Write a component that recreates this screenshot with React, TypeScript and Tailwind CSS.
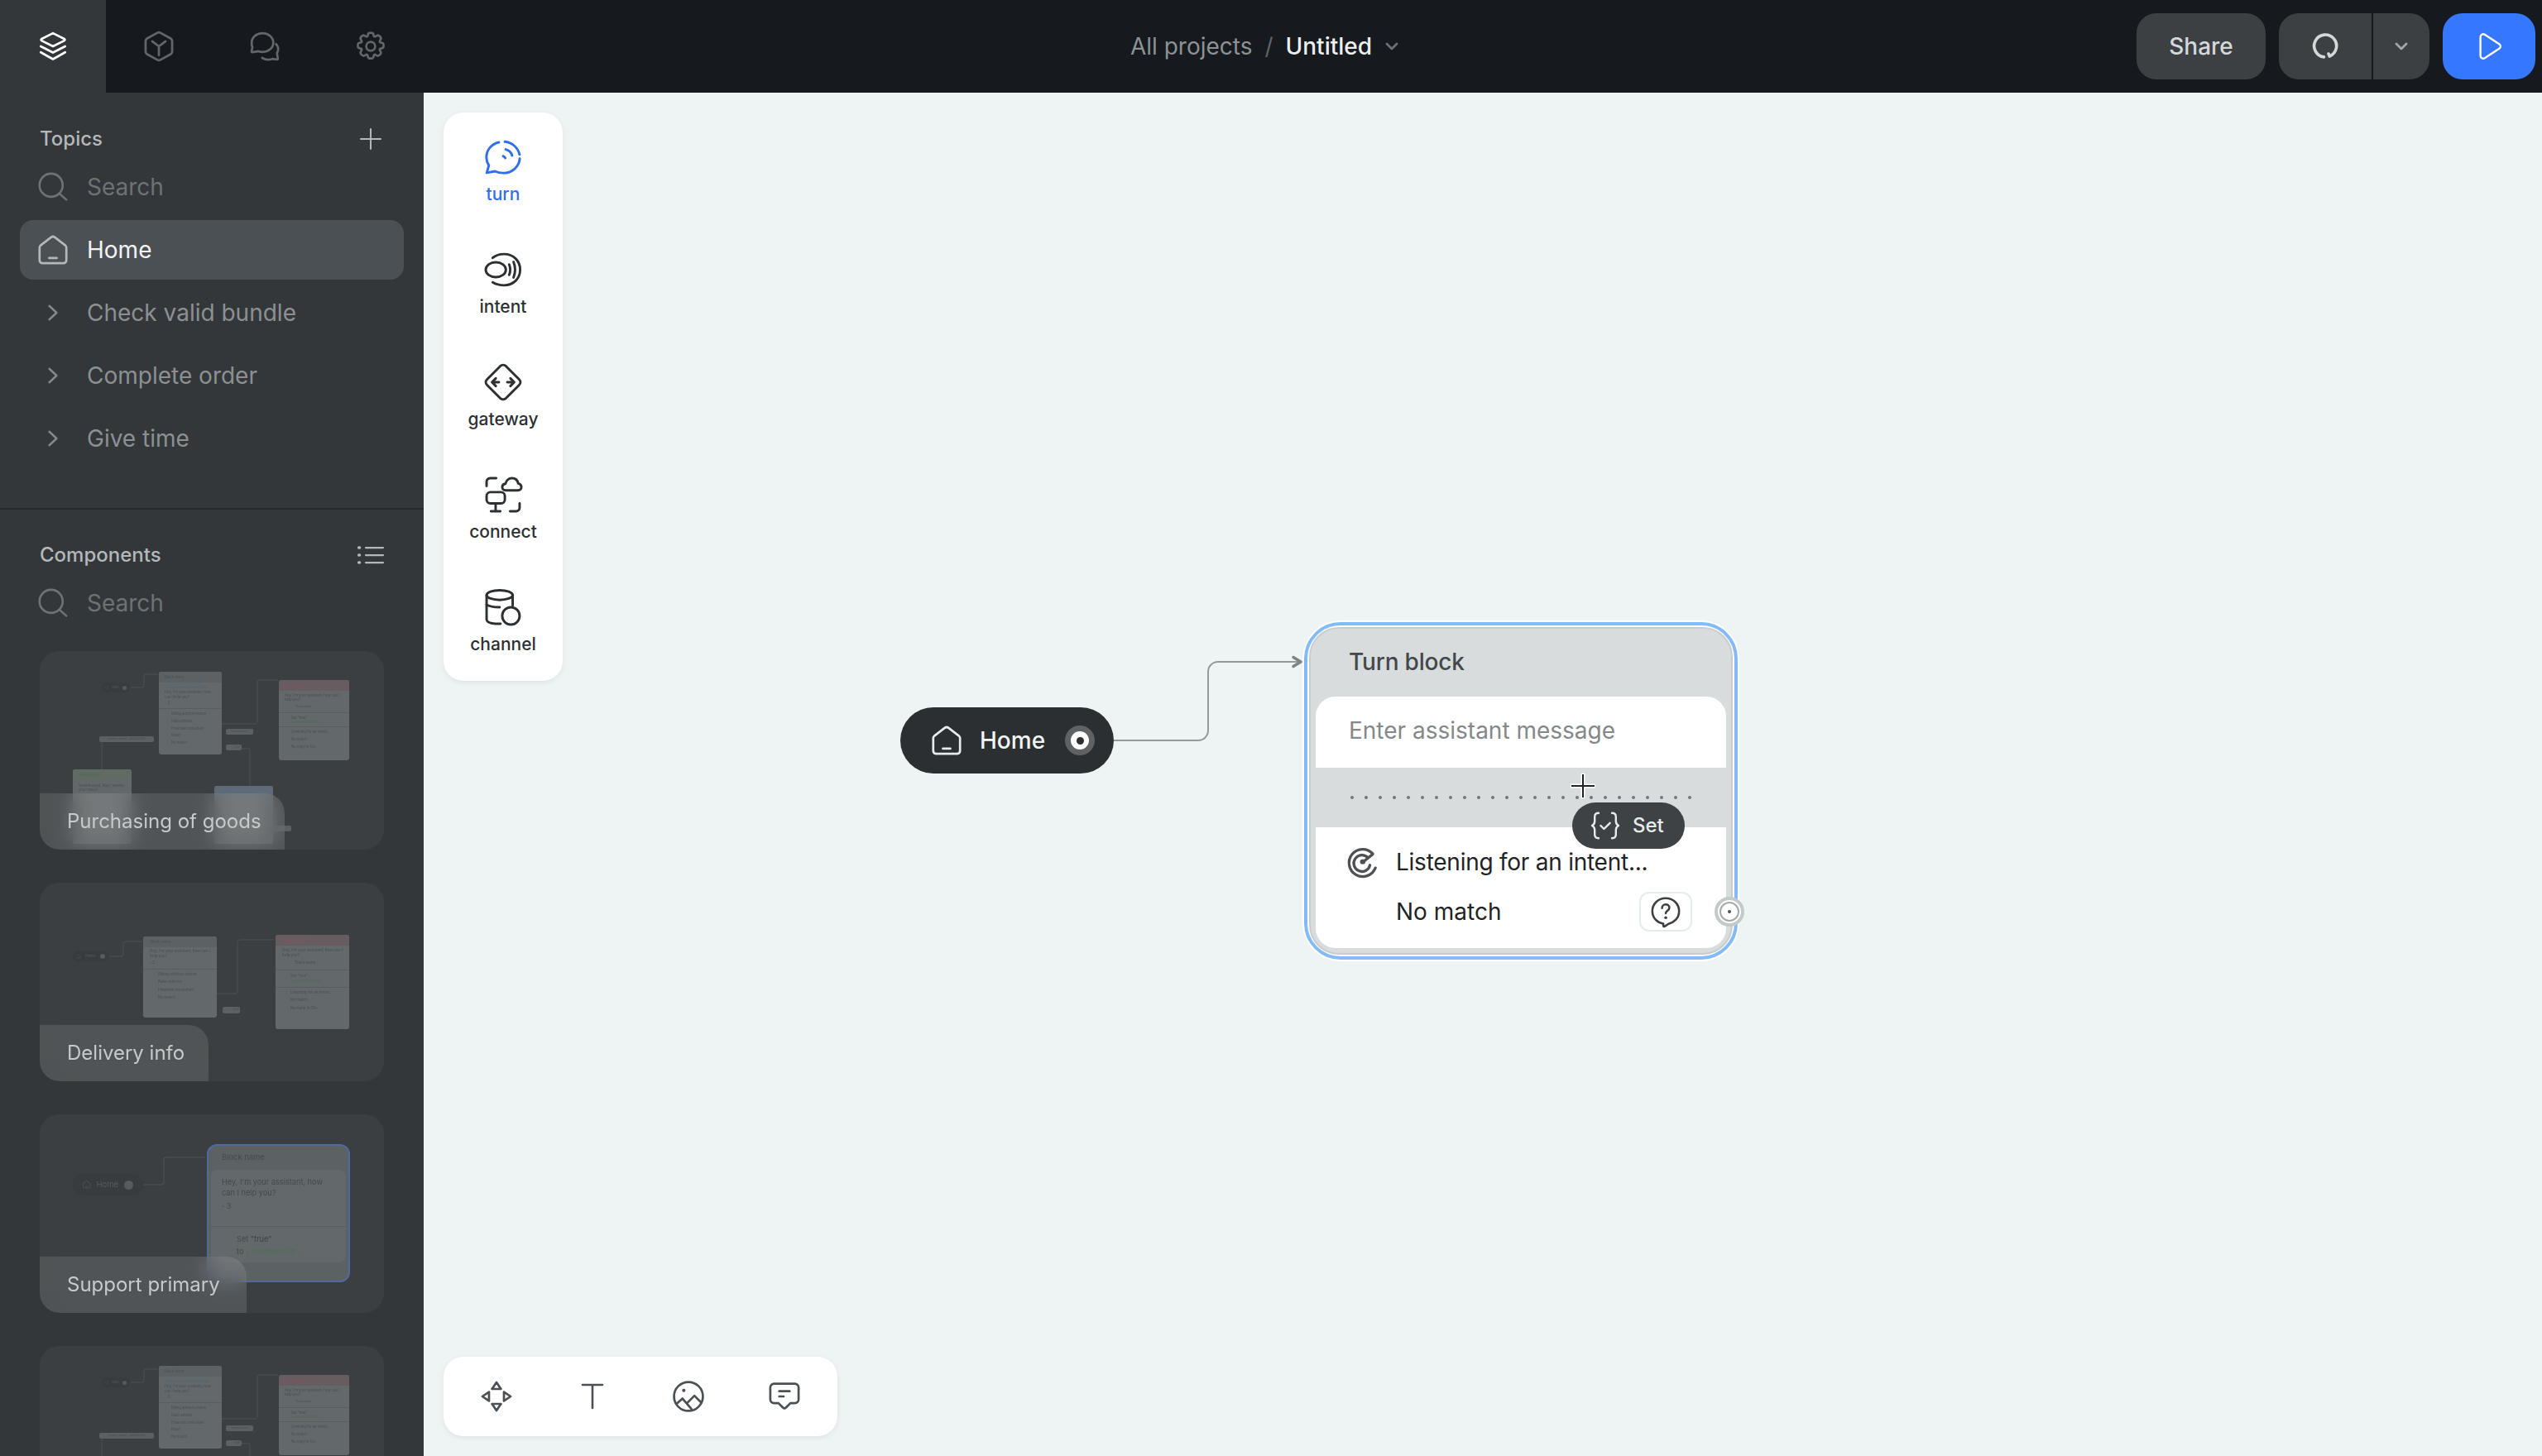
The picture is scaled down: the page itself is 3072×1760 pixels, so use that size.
import React from 'react';

const font = 'font-["Inter","Noto_Sans",sans-serif]';

// ---------------------------------------------------------------------------
// Icons
// ---------------------------------------------------------------------------

function Ico({ className, sw = 1.5, children }: { className?: string; sw?: number; children: React.ReactNode }) {
  return (
    <svg
      viewBox="2 2 20 20"
      fill="none"
      stroke="currentColor"
      strokeWidth={sw}
      strokeLinecap="round"
      strokeLinejoin="round"
      className={className}
      overflow="visible"
    >
      {children}
    </svg>
  );
}

type IconProps = { className?: string; sw?: number };

const LayersIcon = (p: IconProps) => (
  <Ico {...p}>
    <path d="M12 3.200 19.600 7c.5.3.5.9 0 1.200L12 12 4.400 8.200c-.5-.3-.5-.9 0-1.200Z" />
    <path d="M3.800 12 12 16.200 20.200 12" />
    <path d="M3.800 16 12 20.600 20.200 16" />
  </Ico>
);
const BoxIcon = (p: IconProps) => (
  <Ico {...p}>
    <path d="M11 2.900c.6-.3 1.400-.3 2 0l6.900 3.800c.6.4 1 1 1 1.700v7.200c0 .7-.4 1.300-1 1.700L13 21.100c-.6.3-1.400.3-2 0l-6.900-3.800c-.6-.4-1-1-1-1.700V8.400c0-.7.4-1.300 1-1.700Z" />
    <path d="M7.500 8.600 12 12l4.500-3.400M12 12v6" />
  </Ico>
);
const ChatsIcon = (p: IconProps) => (
  <Ico {...p}>
    <path d="M10.500 3.200c4 0 7.200 2.700 7.200 6.300s-3.200 6.300-7.200 6.300c-1 0-1.900-.2-2.800-.5L3.800 16c-.5 0-.8-.3-.7-.7l.6-2.600A6 6 0 0 1 3.200 9.500c0-3.600 3.300-6.300 7.300-6.300Z" />
    <path d="M19.500 10.500c1 .9 1.500 2.100 1.500 3.500 0 1-.3 1.800-.8 2.600l.6 3.800c0 .3-.2.500-.5.500l-3.300-.5c-.9.400-1.800.6-2.800.6-1.500 0-2.900-.5-4-1.300" />
  </Ico>
);
const GearIcon = (p: IconProps) => (
  <Ico {...p}>
    <path d="M10.300 3.600c.3-1 3.100-1 3.400 0l.4 1.400c.1.400.6.600 1 .4l1.300-.7c.9-.5 2.900 1.500 2.400 2.400l-.7 1.300c-.2.400 0 .9.400 1l1.400.4c1 .3 1 3.100 0 3.400l-1.400.4c-.4.100-.6.600-.4 1l.7 1.300c.5.900-1.500 2.900-2.400 2.400l-1.300-.7c-.4-.2-.9 0-1 .4l-.4 1.400c-.3 1-3.100 1-3.400 0l-.4-1.400c-.1-.4-.6-.6-1-.4l-1.300.7c-.9.500-2.900-1.500-2.400-2.400l.7-1.300c.2-.4 0-.9-.4-1l-1.400-.4c-1-.3-1-3.100 0-3.400l1.400-.4c.4-.1.600-.6.400-1l-.7-1.300c-.5-.9 1.500-2.900 2.400-2.400l1.300.7c.4.2.9 0 1-.4Z" />
    <circle cx="12" cy="12" r="3" />
  </Ico>
);
const SearchIcon = (p: IconProps) => (
  <Ico {...p}>
    <circle cx="11" cy="10.500" r="8" />
    <path d="m17 16.500 4.500 4" />
  </Ico>
);
const HomeIcon = (p: IconProps) => (
  <Ico {...p}>
    <path d="M3 10.500c0-.6.300-1.100.700-1.500l7-5.400c.8-.6 1.800-.6 2.600 0l7 5.400c.4.400.700.900.700 1.500V19c0 1.200-.9 2-2 2H5c-1.100 0-2-.8-2-2Z" />
    <path d="M9.500 17.500h5" />
  </Ico>
);
const ListIcon = (p: IconProps) => (
  <Ico {...p}>
    <path d="M8 6h14M8 12h14M8 18h14" />
    <path d="M2.500 6h.5M2.500 12h.5M2.500 18h.5" strokeWidth={2.400} />
  </Ico>
);
const TurnIcon = (p: IconProps) => (
  <Ico {...p}>
    <path d="M9.600 3.400C5.400 4.300 2.400 7.800 2.400 12c0 1.700.5 3.300 1.400 4.700L2.600 21l4.800-.9c1.400.7 3 1 4.600 1 5 0 9.200-3.400 9.600-8.300" />
    <path d="M13 3.100c4.200.4 7.500 3.400 8.500 7.400" />
    <path d="M13.500 7.500c1.900.5 3.200 1.700 3.700 3.600" />
    <path d="M12 11.400c.6.200 1 .5 1.300 1.100" />
  </Ico>
);
const IntentIcon = (p: IconProps) => (
  <Ico {...p}>
    <ellipse cx="7.800" cy="12" rx="5.800" ry="4.300" />
    <path d="M15.500 9c.8 2 .8 4 0 6" />
    <path d="M18 7.500c1.200 3 1.200 6 0 9" />
    <path d="M6 5.200C8 3.500 10.500 3 12.500 3c5.500 0 9.300 4 9.300 9s-3.800 9-9.300 9c-2 0-4.500-.5-6.500-1.700" />
  </Ico>
);
const GatewayIcon = (p: IconProps) => (
  <Ico {...p}>
    <path d="M10.300 2.800c1-.9 2.400-.9 3.400 0l7.500 7.500c1 1 1 2.400 0 3.400l-7.500 7.500c-1 .9-2.400.9-3.400 0l-7.500-7.500c-1-1-1-2.400 0-3.400Z" />
    <path d="M5.800 12h3.800M7.800 9.800 5.600 12l2.200 2.200" />
    <path d="M18.200 12h-3.800M16.200 9.800l2.200 2.200-2.200 2.200" />
  </Ico>
);
const ConnectIcon = (p: IconProps) => (
  <Ico {...p}>
    <path d="M8 2.500H4.500a2 2 0 0 0-2 2V7" />
    <path d="M21.500 17v2.500a2 2 0 0 1-2 2H16" />
    <path d="M13.500 9.500c-1.300 0-2-1-2-1.900 0-1 .8-1.800 1.900-1.900.4-1.900 1.900-3.200 3.700-3.200 1.800 0 3.200 1.200 3.600 3 1.100.2 1.800 1.100 1.800 2.100 0 1-.7 1.900-2 1.900Z" />
    <rect x="2.500" y="10.500" width="10.500" height="6.500" rx="2.200" />
    <path d="M7.700 17v4M5 21.500h5.400" />
  </Ico>
);
const ChannelIcon = (p: IconProps) => (
  <Ico {...p}>
    <ellipse cx="10" cy="5" rx="7.500" ry="2.800" />
    <path d="M2.500 5v14c0 1.300 1.500 2.300 5 2.500h3" />
    <path d="M17.500 5v6" />
    <path d="M2.500 10.500c1.500 1 4 1.500 7.500 1.500" />
    <circle cx="16.500" cy="17" r="5" />
  </Ico>
);
const MoveIcon = (p: IconProps) => (
  <Ico {...p}>
    <path d="M12 2.500 15 7H9Z" />
    <path d="M12 21.500 9 17h6Z" />
    <path d="M2.500 12 7 9v6Z" />
    <path d="M21.500 12 17 15V9Z" />
  </Ico>
);
const ImageIcon = (p: IconProps) => (
  <Ico {...p}>
    <circle cx="12" cy="12" r="9.700" />
    <path d="M8.800 8h.1" strokeWidth={2.200} />
    <path d="m4 17 4-3.600 6 7" />
    <path d="m11 16.500 5-5 4.500 4.500" />
  </Ico>
);
const CommentIcon = (p: IconProps) => (
  <Ico {...p}>
    <path d="M5 3.500h14a2.500 2.500 0 0 1 2.500 2.500v8a2.500 2.500 0 0 1-2.500 2.500h-3l-3 3c-.6.600-1.400.600-2 0l-3-3H5A2.500 2.500 0 0 1 2.500 14V6A2.500 2.500 0 0 1 5 3.500Z" />
    <path d="M8.500 8.500h7M8.500 12h3" />
  </Ico>
);
const TargetIcon = (p: IconProps) => (
  <Ico {...p}>
    <path d="M19.500 5.500A10 10 0 1 0 21.500 16" />
    <path d="M16 8.500A6 6 0 1 0 17.500 14" />
    <path d="M12 11.500h.4" strokeWidth={3.500} />
    <path d="m12 12 7.500-6" />
  </Ico>
);
const QuestionIcon = (p: IconProps) => (
  <Ico {...p}>
    <path d="M12 2.500c5.300 0 9.500 3.900 9.500 9.200 0 5-3.600 8-7.500 9l-2.800 1.800c-.5.300-.9 0-.9-.5v-1.500c-4.300-.8-7.800-4-7.800-8.800 0-5.300 4.200-9.200 9.500-9.200Z" />
    <path d="M9.400 9.500c0-1.500 1.100-2.600 2.600-2.600s2.600 1 2.600 2.300c0 2-2.600 2-2.600 4" />
    <path d="M12 16.300h.1" strokeWidth={2} />
  </Ico>
);
const SetIcon = (p: IconProps) => (
  <Ico {...p}>
    <path d="M7 2.500c-2 0-3 1-3 2.800v3.400c0 1.500-.7 2.600-2 3.300 1.300.7 2 1.800 2 3.300v3.400c0 1.800 1 2.800 3 2.800" />
    <path d="M17 2.500c2 0 3 1 3 2.800v3.400c0 1.500.7 2.600 2 3.300-1.300.7-2 1.800-2 3.300v3.400c0 1.800-1 2.800-3 2.800" />
    <path d="m8.500 12 2.500 2.500 4.500-4.500" />
  </Ico>
);
const AlexaIcon = (p: IconProps) => (
  <Ico {...p} sw={2.400}>
    <path d="M11 20.600A9 9 0 1 1 15.500 20l-.8-2" />
  </Ico>
);
const PlayIcon = (p: IconProps) => (
  <Ico {...p}>
    <path d="M5.500 5c0-1.800 1.700-2.800 3.200-1.900l11 7.200c1.300.9 1.300 2.600 0 3.400l-11 7.200C7.200 21.800 5.500 20.800 5.500 19Z" />
  </Ico>
);
const ChevronDown = (p: IconProps) => (
  <Ico {...p} sw={2.800}>
    <path d="m6 9 6 6 6-6" />
  </Ico>
);
const ChevronRight = (p: IconProps) => (
  <Ico {...p} sw={2.200}>
    <path d="m8 4.500 8 7.500-8 7.500" />
  </Ico>
);

// ---------------------------------------------------------------------------
// Header
// ---------------------------------------------------------------------------

function Header() {
  const tabs = [LayersIcon, BoxIcon, ChatsIcon, GearIcon];
  return (
    <header className="flex h-[112px] shrink-0 items-center bg-[#16191e]">
      <div className="flex h-full w-[512px] shrink-0">
        {tabs.map((Icon, i) => (
          <div
            key={i}
            className={`flex h-full w-[128px] items-center justify-center ${i === 0 ? 'bg-[#33373a] text-white' : 'text-[#62676a]'}`}
          >
            <Icon className="h-[36px] w-[36px]" />
          </div>
        ))}
      </div>
      <div className="flex flex-1 items-center justify-center pr-[36px] text-[28px]">
        <span className="text-[#8d9294]">All projects</span>
        <span className="ml-[15px] text-[#5f6467]">/</span>
        <span className="ml-[15px] font-medium text-[#eceff0]">Untitled</span>
        <ChevronDown className="ml-[14px] h-[20px] w-[20px] text-[#6c7174]" />
      </div>
      <div className="flex items-center pr-[8px]">
        <button type="button" className="flex h-[80px] w-[156px] items-center justify-center rounded-[24px] bg-[#3c4043] text-[28px] font-medium text-[#d5d8d9]">
          Share
        </button>
        <div className="ml-[16px] flex h-[80px] w-[182px] gap-[2px]">
          <div className="flex w-[112px] items-center justify-center rounded-l-[24px] bg-[#3c4043] text-[#d5d8d9]">
            <AlexaIcon className="h-[30px] w-[30px]" />
          </div>
          <div className="flex w-[68px] items-center justify-center rounded-r-[24px] bg-[#3c4043] text-[#a3a7a9]">
            <ChevronDown className="h-[20px] w-[20px]" />
          </div>
        </div>
        <button type="button" className="ml-[16px] flex h-[80px] w-[112px] items-center justify-center rounded-[24px] bg-[#3577ff] text-white">
          <PlayIcon className="h-[32px] w-[32px]" />
        </button>
      </div>
    </header>
  );
}

// ---------------------------------------------------------------------------
// Thumbnails
// ---------------------------------------------------------------------------

function MiniBlock({
  className,
  title,
  head = 'bg-[#5c6163] text-[#4c5053]',
  text = 'text-[4.200px]',
  headH = 'h-[13px] pl-[7px]',
  children,
}: {
  className: string;
  title: string;
  head?: string;
  text?: string;
  headH?: string;
  children?: React.ReactNode;
}) {
  return (
    <div className={`absolute overflow-hidden rounded-[3px] bg-[#63686a] leading-[1.300] text-[#4a4e51] ${text} ${className}`}>
      <div className={`flex items-center ${headH} ${head}`}>{title}</div>
      {children}
    </div>
  );
}

const MiniDivider = () => <div className="h-px bg-[#585d5f]" />;

function MiniPill({ className, children }: { className: string; children: React.ReactNode }) {
  return (
    <div className={`absolute flex items-center whitespace-nowrap rounded-[2px] bg-[#5b6062] px-[2px] text-[3.600px] leading-none text-[#474b4e] ${className}`}>
      {children}
    </div>
  );
}

function DarkPill({ className, label, text, dot }: { className: string; label: string; text: string; dot: string }) {
  return (
    <div className={`absolute flex items-center justify-between rounded-full bg-[#383c3f] text-[#565b5e] ${className} ${text}`}>
      <HomeIcon className="h-[1em] w-[1em]" />
      <span>{label}</span>
      <span className={`rounded-full bg-[#565b5e] ${dot}`} />
    </div>
  );
}

const RED_HEAD = 'bg-[#675d61] text-[#84525e]';

function FlowA({ offset }: { offset?: boolean }) {
  return (
    <>
      <svg className="absolute inset-0 h-full w-full" fill="none" stroke="#505558" strokeWidth="0.8">
        <path d="M110 44h13a3 3 0 0 0 3-3V31a3 3 0 0 1 3-3h14" />
        <path d="M220 88h40a3 3 0 0 0 3-3V38a3 3 0 0 1 3-3h22" />
        <path d="M75 110v52" />
        <path d="M244 118h10v48" />
      </svg>
      <DarkPill className="left-[75px] top-[38px] h-[12px] w-[34px] px-[4px]" text="text-[3.800px]" label="Start" dot="h-[5px] w-[5px]" />
      <MiniBlock className={`left-[144px] w-[76px] ${offset ? 'top-[24px] h-[100px]' : 'top-[25px] h-[100px]'}`} title="Block name">
        <div className="px-[7px] pt-[3px]">
          <div className="text-[#4f6672]">{'{Company}'} contains Value</div>
          <div className="mt-[1px]">Hey, I'm your assistant, how can I help you?</div>
          <div className="mt-[2px] pb-[3px]">◌ 3</div>
        </div>
        <MiniDivider />
        <div className="flex flex-col gap-[3.400px] pl-[15px] pt-[3px]">
          <span>Billing address doesn</span>
          <span>Rabo advisor</span>
          <span>Financial consultant</span>
          <span>Reset</span>
          <span>No match</span>
        </div>
      </MiniBlock>
      <MiniBlock className="left-[289px] top-[35px] h-[97px] w-[85px]" title="Not activated" head={RED_HEAD}>
        <div className="px-[7px] pt-[3px]">
          <div>Hey, I'm your assistant, how can I help you?</div>
          <div className="mt-[3px] pb-[4px] pl-[13px] text-[3.600px]">Track name</div>
        </div>
        <MiniDivider />
        <div className="px-[15px] py-[3px]">
          <div>Set "true"</div>
          <div className="text-[#4e6a56]">to {'{membership}'}</div>
        </div>
        <MiniDivider />
        <div className="flex flex-col gap-[3.500px] px-[15px] pt-[3px]">
          <span>Listening for an intent...</span>
          <span>No match</span>
          <span>No reply in 10s</span>
        </div>
      </MiniBlock>
      <MiniPill className={`left-[72px] h-[7px] w-[66px] justify-center ${offset ? 'top-[105px]' : 'top-[103px]'}`}>create-zevel1...ab4a7a280</MiniPill>
      <MiniPill className={`left-[225px] h-[7px] w-[33px] justify-center ${offset ? 'top-[96px]' : 'top-[94px]'}`}>Intent name</MiniPill>
      <MiniPill className={`left-[225px] h-[7px] w-[19px] justify-end ${offset ? 'top-[114px]' : 'top-[113px]'}`}>Exit</MiniPill>
      {!offset && (
        <>
          <MiniBlock className="left-[40px] top-[143px] h-[90px] w-[71px]" title="Asking name" head="bg-[#5f6b63] text-[#4f6a55]">
            <div className="px-[7px] pt-[4px]">Sounds good. May I wonder your name?</div>
          </MiniBlock>
          <MiniBlock className="left-[211px] top-[163px] h-[70px] w-[71px]" title="Switch" head="bg-[#5e6a77] text-[#4d6a8a]" />
          <MiniPill className="left-[272px] top-[211px] h-[7px] w-[32px]">Exit flow</MiniPill>
        </>
      )}
    </>
  );
}

function FlowB() {
  return (
    <>
      <svg className="absolute inset-0 h-full w-full" fill="none" stroke="#505558" strokeWidth="0.8">
        <path d="M84 89h14a3 3 0 0 0 3-3V74a3 3 0 0 1 3-3h19" />
        <path d="M214 134h22a3 3 0 0 0 3-3V72a3 3 0 0 1 3-3h41" />
      </svg>
      <DarkPill className="left-[40px] top-[82px] h-[14px] w-[44px] px-[5px]" text="text-[4.600px]" label="Home" dot="h-[6px] w-[6px]" />
      <MiniBlock className="left-[125px] top-[65px] h-[98px] w-[89px]" title="Block name" text="text-[4.600px]" headH="h-[13px] pl-[8px]">
        <div className="px-[8px] pt-[2px]">
          <div>Hey, I'm your assistant, how can I help you?</div>
          <div className="mt-[2px] pb-[4px]">▫ 3</div>
        </div>
        <MiniDivider />
        <div className="flex flex-col gap-[3.500px] pl-[18px] pt-[3px]">
          <span>Billing address doesn</span>
          <span>Rabo advisor</span>
          <span>Financial consultant</span>
          <span>No match</span>
        </div>
      </MiniBlock>
      <MiniBlock
        className="left-[285px] top-[63px] h-[114px] w-[89px]"
        title="Not activated"
        head={RED_HEAD}
        text="text-[4.600px]"
        headH="h-[13px] pl-[8px]"
      >
        <div className="px-[8px] pt-[3px]">
          <div>Hey, I'm your assistant, how can I help you?</div>
          <div className="mt-[3px] pb-[5px] pl-[15px]">Track name</div>
        </div>
        <MiniDivider />
        <div className="px-[18px] py-[4px]">
          <div>Set "true"</div>
          <div className="text-[#4e6a56]">to {'{membership}'}</div>
        </div>
        <MiniDivider />
        <div className="flex flex-col gap-[3.500px] px-[18px] pt-[3px]">
          <span>Listening for an intent...</span>
          <span>No match</span>
          <span>No reply in 10s</span>
        </div>
      </MiniBlock>
      <MiniPill className="left-[221px] top-[150px] h-[8px] w-[21px] justify-end">Exit</MiniPill>
    </>
  );
}

function FlowC() {
  return (
    <>
      <svg className="absolute inset-0 h-full w-full" fill="none" stroke="#505558" strokeWidth="1">
        <path d="M125 85h22a3 3 0 0 0 3-3V55a3 3 0 0 1 3-3h47" />
      </svg>
      <DarkPill className="left-[40px] top-[72px] h-[26px] w-[85px] px-[12px]" text="text-[9.500px]" label="Home" dot="h-[11px] w-[11px]" />
      <div className="absolute left-[202px] top-[36px] h-[167px] w-[173px] rounded-[12px] border-2 border-[#4f6a9c] bg-[#5c6163]">
        <div className="flex h-[29px] items-center pl-[16px] text-[9.400px] text-[#45494c]">Block name</div>
        <div className="mx-[3px] h-[112px] rounded-[8px] bg-[#63686a] text-[9.200px] text-[#45494c]">
          <div className="h-[68px] px-[13px] pt-[8px] leading-[13px]">
            Hey, I'm your assistant, how can I help you?
            <div className="mt-[3px]">▫ 3</div>
          </div>
          <MiniDivider />
          <div className="pl-[31px] pt-[8px] leading-[14.500px]">
            <div>
              Set <span className="text-[#3f4346]">"true"</span>
            </div>
            <div>
              to <span className="text-[#4c6f56]">{'{ membership }'}</span>
            </div>
          </div>
        </div>
      </div>
    </>
  );
}

function ThumbCard({ label, labelW, children }: { label?: string; labelW?: string; children: React.ReactNode }) {
  return (
    <div className="relative h-[240px] w-[416px] shrink-0 overflow-hidden rounded-[24px] bg-[#3b3f42]">
      <div className="absolute inset-0 blur-[0.4px]">{children}</div>
      {label && (
        <div className={`absolute bottom-0 left-0 flex h-[68px] items-center rounded-tr-[24px] bg-white/[0.11] pl-[33px] text-[24px] text-[#c6cacb] backdrop-blur-md ${labelW}`}>
          {label}
        </div>
      )}
    </div>
  );
}

// ---------------------------------------------------------------------------
// Sidebar
// ---------------------------------------------------------------------------

function SearchRow() {
  return (
    <div className="mt-[22px] flex h-[40px] items-center gap-[24px] pl-[46px] text-[28px] text-[#6d7275]">
      <SearchIcon className="h-[35px] w-[35px]" />
      <span>Search</span>
    </div>
  );
}

function Sidebar() {
  const topics = ['Check valid bundle', 'Complete order', 'Give time'];
  return (
    <aside className="flex w-[512px] shrink-0 flex-col overflow-hidden bg-[#33373a]">
      <div className="h-[504px] shrink-0 border-b-2 border-[#272a2d] pt-[40px]">
        <div className="flex h-[32px] items-center justify-between pl-[48px] pr-[51px] text-[24px] font-medium text-[#b4b8b9]">
          <span>Topics</span>
          <svg viewBox="0 0 26 26" className="h-[26px] w-[26px]" stroke="#b4b8b9" strokeWidth="2" strokeLinecap="round">
            <path d="M13 1v24M1 13h24" />
          </svg>
        </div>
        <SearchRow />
        <div className="mt-[20px] flex flex-col gap-[4px] px-[24px] text-[28px]">
          <div className="flex h-[72px] items-center gap-[23px] rounded-[16px] bg-[#4b5054] pl-[22px] text-[#f2f4f4]">
            <HomeIcon className="h-[36px] w-[36px] text-[#b4b8b9]" />
            <span>Home</span>
          </div>
          {topics.map(t => (
            <div key={t} className="flex h-[72px] items-center pl-[24px] text-[#8c9092]">
              <div className="flex w-[32px] justify-center">
                <ChevronRight className="h-[22px] w-[22px] text-[#85898b]" />
              </div>
              <span className="ml-[25px]">{t}</span>
            </div>
          ))}
        </div>
      </div>
      <div className="pt-[39px]">
        <div className="flex h-[32px] items-center justify-between pl-[48px] pr-[49px] text-[24px] font-medium text-[#b4b8b9]">
          <span>Components</span>
          <ListIcon className="h-[30px] w-[30px] text-[#b4b8b9]" />
        </div>
        <SearchRow />
        <div className="mt-[38px] flex flex-col gap-[40px] pl-[48px]">
          <ThumbCard label="Purchasing of goods" labelW="w-[296px]">
            <FlowA />
          </ThumbCard>
          <ThumbCard label="Delivery info" labelW="w-[204px]">
            <FlowB />
          </ThumbCard>
          <ThumbCard label="Support primary" labelW="w-[250px]">
            <FlowC />
          </ThumbCard>
          <ThumbCard>
            <FlowA offset />
          </ThumbCard>
        </div>
      </div>
    </aside>
  );
}

// ---------------------------------------------------------------------------
// Canvas
// ---------------------------------------------------------------------------

function Palette() {
  const items = [
    { label: 'turn', Icon: TurnIcon, active: true },
    { label: 'intent', Icon: IntentIcon },
    { label: 'gateway', Icon: GatewayIcon },
    { label: 'connect', Icon: ConnectIcon },
    { label: 'channel', Icon: ChannelIcon },
  ];
  return (
    <div className="absolute left-[24px] top-[24px] flex h-[687px] w-[144px] flex-col items-center gap-[40px] rounded-[24px] bg-white pt-[33px] shadow-[0_2px_6px_rgba(40,50,60,0.08)]">
      {items.map(({ label, Icon, active }) => (
        <div key={label} className={`flex h-[96px] flex-col items-center ${active ? 'text-[#2f6fed]' : 'text-[#2c3033]'}`}>
          <Icon className="h-[42px] w-[42px]" sw={1.400} />
          <span className="mt-[10px] text-[21px] font-medium leading-[28px]">{label}</span>
        </div>
      ))}
    </div>
  );
}

function BottomBar() {
  return (
    <div className="absolute bottom-[24px] left-[24px] flex h-[96px] w-[476px] items-center gap-[80px] rounded-[24px] bg-white pl-[46px] text-[#4b5054] shadow-[0_2px_6px_rgba(40,50,60,0.08)]">
      <MoveIcon className="h-[36px] w-[36px]" />
      <svg viewBox="0 0 36 36" className="h-[36px] w-[36px]" fill="none" stroke="currentColor" strokeWidth="2.600" strokeLinecap="round">
        <path d="M6 4h24M18 4v28" />
      </svg>
      <ImageIcon className="h-[36px] w-[36px]" />
      <CommentIcon className="h-[36px] w-[36px]" />
    </div>
  );
}

function HomeNode() {
  return (
    <div className="absolute left-[576px] top-[743px] flex h-[80px] w-[258px] items-center rounded-full bg-[#2b2f32] pl-[38px] text-[28px] font-medium text-[#f3f5f5]">
      <HomeIcon className="h-[36px] w-[36px] text-[#e7eaea]" />
      <span className="ml-[22px]">Home</span>
      <span className="ml-[24px] flex h-[36px] w-[36px] items-center justify-center rounded-full bg-[#5f6265]">
        <span className="flex h-[22px] w-[22px] items-center justify-center rounded-full bg-white">
          <span className="h-[9px] w-[9px] rounded-full bg-[#2b2f32]" />
        </span>
      </span>
    </div>
  );
}

function Connector() {
  return (
    <svg className="absolute left-[832px] top-[680px] h-[220px] w-[240px]" fill="none">
      <path d="M2 103h102a12 12 0 0 0 12-12V20a12 12 0 0 1 12-12h98" stroke="#959a9a" strokeWidth="2" />
      <path d="M219 2.500 228 8l-9 5.500" stroke="#7e8384" strokeWidth="3.500" strokeLinecap="round" strokeLinejoin="round" />
    </svg>
  );
}

function TurnBlock() {
  return (
    <div className="absolute left-[1064px] top-[640px] h-[408px] w-[524px] rounded-[44px] border-[4px] border-[#82bbf8] bg-white p-[2px] shadow-[0_0_0_2px_#ffffff]">
      <div className="flex h-full flex-col rounded-[36px] border-2 border-[#c9cdce] bg-[#d9dcdd]">
        <div className="flex h-[82px] shrink-0 items-center pb-[3px] pl-[46px] text-[28px] font-medium tracking-[-0.2px] text-[#44484b]">
          Turn block
        </div>
        <div className="mx-[6px] flex h-[86px] shrink-0 items-center rounded-t-[24px] bg-white pb-[4px] pl-[40px] text-[28px] text-[#83888a]">
          Enter assistant message
        </div>
        <div className="relative mx-[6px] h-[72px] shrink-0">
          <div className="absolute left-[42px] top-[34px] flex gap-[13px]">
            {Array.from({ length: 25 }).map((_, i) => (
              <span key={i} className="h-[4px] w-[4px] rounded-full bg-[#73787a]" />
            ))}
          </div>
        </div>
        <div className="mx-[6px] mb-[6px] flex flex-1 flex-col rounded-b-[24px] bg-white pl-[40px] text-[28px] text-[#1f2326]">
          <div className="flex h-[60px] items-center pt-[24px]">
            <TargetIcon className="h-[33px] w-[33px] text-[#4d5154]" sw={2} />
            <span className="ml-[24px] tracking-[-0.25px]">Listening for an intent...</span>
          </div>
          <div className="mt-[18px] flex h-[48px] items-center pl-[57px]">
            <span>No match</span>
            <span className="ml-auto mr-[41px] flex h-[48px] w-[64px] items-center justify-center rounded-[12px] border-2 border-[#e6ebeb]">
              <QuestionIcon className="h-[34px] w-[34px] text-[#3c4043]" />
            </span>
          </div>
        </div>
      </div>
      <div className="absolute left-[320px] top-[214px] flex h-[56px] w-[136px] items-center rounded-full bg-[#3e4245] pl-[24px] text-[24px] font-medium text-[#e8ebeb]">
        <SetIcon className="h-[32px] w-[32px] text-[#e8ebeb]" />
        <span className="ml-[17px]">Set</span>
      </div>
      <svg className="absolute left-[318px] top-[179px] h-[30px] w-[30px]" viewBox="0 0 30 30" fill="none" strokeLinecap="square">
        <path d="M15 2v26M2 15h26" stroke="#ffffff" strokeWidth="5" />
        <path d="M15 2v26M2 15h26" stroke="#1f2326" strokeWidth="2" />
      </svg>
      <span className="absolute left-[492px] top-[328px] flex h-[36px] w-[36px] items-center justify-center rounded-full border-[4px] border-[#c4c9c9] bg-white">
        <span className="flex h-[24px] w-[24px] items-center justify-center rounded-full border-2 border-[#a4a9aa]">
          <span className="h-[4px] w-[4px] rounded-full bg-[#4d5154]" />
        </span>
      </span>
    </div>
  );
}

function Canvas() {
  return (
    <main className="relative flex-1 overflow-hidden bg-[#eef3f3]">
      <Palette />
      <BottomBar />
      <Connector />
      <HomeNode />
      <TurnBlock />
    </main>
  );
}

export default function App() {
  return (
    <div className={`flex h-[1760px] w-[3072px] flex-col overflow-hidden ${font}`}>
      <Header />
      <div className="flex min-h-0 flex-1">
        <Sidebar />
        <Canvas />
      </div>
    </div>
  );
}
